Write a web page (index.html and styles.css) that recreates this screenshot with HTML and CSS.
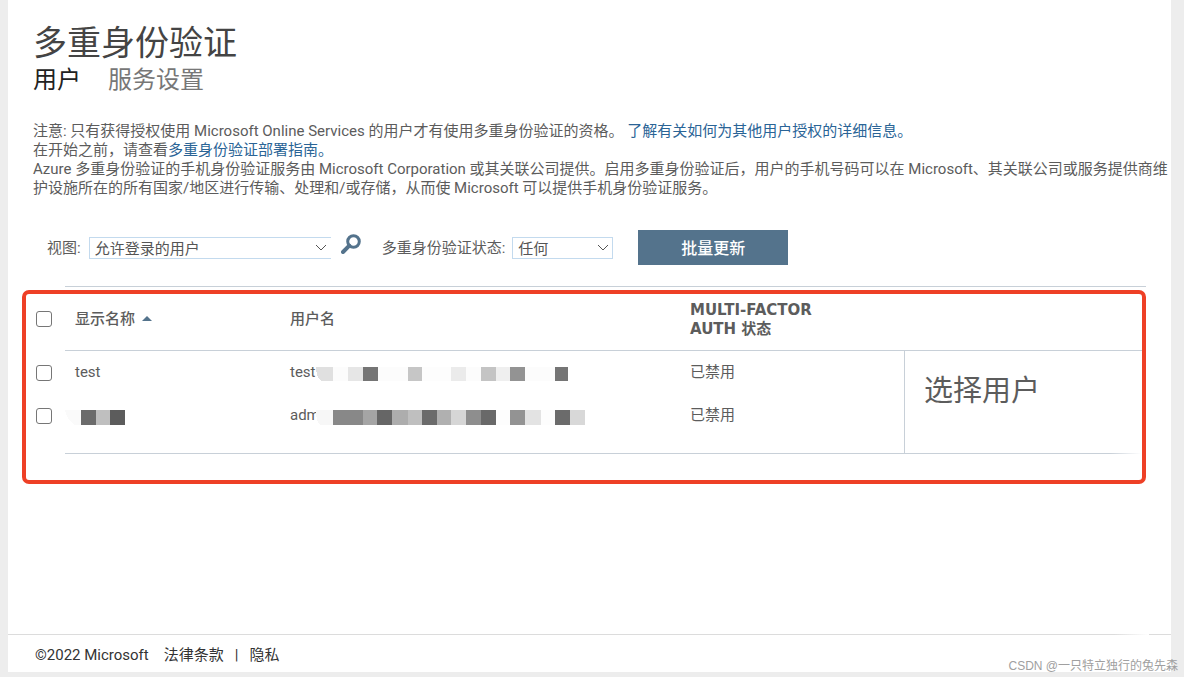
FILE: index.html
```html
<!DOCTYPE html>
<html lang="zh-CN">
<head>
<meta charset="utf-8">
<meta name="viewport" content="width=device-width, initial-scale=1">
<title>多重身份验证</title>
<link rel="stylesheet" href="styles.css">
</head>
<body>
<div class="page">
  <main class="content">
    <h1 class="title">多重身份验证</h1>
    <nav class="tabs">
      <a class="tab tab-active" href="#users" aria-current="page">用户</a>
      <a class="tab" href="#settings">服务设置</a>
    </nav>
    <div class="notice">
      <p>注意: 只有获得授权使用 Microsoft Online Services 的用户才有使用多重身份验证的资格。 <a href="#license">了解有关如何为其他用户授权的详细信息。</a></p>
      <p>在开始之前，请查看<a href="#guide">多重身份验证部署指南。</a></p>
      <p>Azure 多重身份验证的手机身份验证服务由 Microsoft Corporation 或其关联公司提供。启用多重身份验证后，用户的手机号码可以在 Microsoft、其关联公司或服务提供商维护设施所在的所有国家/地区进行传输、处理和/或存储，从而使 Microsoft 可以提供手机身份验证服务。</p>
    </div>
    <form class="filters">
      <label class="label" for="view">视图:</label>
      <span class="picker picker-view">
        <select id="view"><option>允许登录的用户</option></select>
        <svg class="chevron" viewBox="0 0 12 8" aria-hidden="true"><path d="M1 1l5 5 5-5"/></svg>
      </span>
      <button class="search" type="button" aria-label="搜索">
        <svg viewBox="0 0 20 20" aria-hidden="true"><circle cx="12.500" cy="7.500" r="5.800"/><path class="handle" d="M8.300 11.700L2 18"/></svg>
      </button>
      <label class="label" for="state">多重身份验证状态:</label>
      <span class="picker picker-state">
        <select id="state"><option>任何</option></select>
        <svg class="chevron" viewBox="0 0 12 8" aria-hidden="true"><path d="M1 1l5 5 5-5"/></svg>
      </span>
      <button class="bulk" type="button">批量更新</button>
    </form>
    <section class="results">
      <table class="users">
        <colgroup><col class="col-check"><col class="col-name"><col class="col-user"><col class="col-state"><col class="col-panel"></colgroup>
        <thead>
          <tr>
            <td class="check"><input type="checkbox" aria-label="全选"></td>
            <th scope="col">显示名称<svg class="sort" viewBox="0 0 10 6" aria-hidden="true"><path d="M0 6L5 1l5 5z"/></svg></th>
            <th scope="col">用户名</th>
            <th scope="col"><span class="auth">MULTI-FACTOR AUTH 状态</span></th>
            <th></th>
          </tr>
        </thead>
        <tbody>
          <tr>
            <td class="check"><input type="checkbox" aria-label="test"></td>
            <td>test</td>
            <td><div class="masked"><span class="stub">test</span><svg class="mosaic" width="269" height="14" viewBox="0 0 269 14" aria-hidden="true">
              <path fill="#e0e0e0" d="M0 0h17v14H5Q0 10 0 0z"/><path fill="#fcfcfc" d="M17 0h15v14H17z"/><path fill="#e6e6e6" d="M32 0h15v14H32z"/><path fill="#757575" d="M47 0h15v14H47z"/><path fill="#fcfcfc" d="M62 0h30v14H62z"/><path fill="#c6c6c6" d="M92 0h14v14H92z"/><path fill="#fdfdfd" d="M106 0h29v14h-29z"/><path fill="#ebebeb" d="M135 0h15v14h-15z"/><path fill="#fcfcfc" d="M150 0h15v14h-15z"/><path fill="#c4c4c4" d="M165 0h15v14h-15z"/><path fill="#efefef" d="M180 0h14v14h-14z"/><path fill="#939393" d="M194 0h15v14h-15z"/><path fill="#fcfcfc" d="M209 0h30v14h-30z"/><path fill="#757575" d="M239 0h13v14h-13z"/>
            </svg></div></td>
            <td>已禁用</td>
            <td class="panel" rowspan="2"><h2>选择用户</h2></td>
          </tr>
          <tr>
            <td class="check"><input type="checkbox" aria-label="adm"></td>
            <td class="name-masked"><svg class="mosaic" width="60" height="15" viewBox="0 0 60 15" aria-hidden="true">
              <path fill="#fafafa" d="M0 0h16v15H9Q2 9 0 0z"/><path fill="#6b6b6b" d="M16 0h15v15H16z"/><path fill="#bfbfbf" d="M31 0h14v15H31z"/><path fill="#5c5c5c" d="M45 0h15v15H45z"/>
            </svg></td>
            <td><div class="masked"><span class="stub">adm</span><svg class="mosaic mosaic-cover" width="269" height="15" viewBox="0 0 269 15" aria-hidden="true">
              <path fill="#f7f7f7" d="M0 0h17v15H5Q0 13 0 0z"/><path fill="#888888" d="M17 0h30v15H17z"/><path fill="#a5a5a5" d="M47 0h14v15H47z"/><path fill="#666666" d="M61 0h15v15H61z"/><path fill="#adadad" d="M76 0h16v15H76z"/><path fill="#bfbfbf" d="M92 0h14v15H92z"/><path fill="#6b6b6b" d="M106 0h15v15h-15z"/><path fill="#b0b0b0" d="M121 0h14v15h-14z"/><path fill="#d6d6d6" d="M135 0h15v15h-15z"/><path fill="#8e8e8e" d="M150 0h15v15h-15z"/><path fill="#696969" d="M165 0h15v15h-15z"/><path fill="#fdfdfd" d="M180 0h14v15h-14z"/><path fill="#939393" d="M194 0h15v15h-15z"/><path fill="#e3e3e3" d="M209 0h16v15h-16z"/><path fill="#fdfdfd" d="M225 0h14v15h-14z"/><path fill="#6b6b6b" d="M239 0h15v15h-15z"/><path fill="#d8d8d8" d="M254 0h15v15h-15z"/>
            </svg></div></td>
            <td>已禁用</td>
          </tr>
        </tbody>
      </table>
      <div class="highlight"></div>
    </section>
  </main>
  <footer class="footer">
    <span>©2022 Microsoft</span>
    <a class="legal" href="#legal">法律条款</a>
    <span class="bar">|</span>
    <a href="#privacy">隐私</a>
  </footer>
</div>
<div class="watermark">CSDN @一只特立独行的兔先森</div>
</body>
</html>
```
FILE: styles.css
```css
* { box-sizing: border-box; }

body {
  margin: 0;
  min-height: 100vh;
  display: flex;
  flex-direction: column;
  padding: 0 13px 5px 8px;
  background: #ededed;
  color: #5c5c5c;
  font: 15px/19px Roboto, "Noto Sans CJK SC", sans-serif;
}

h1, h2, p { margin: 0; font-weight: 400; }
a { color: inherit; text-decoration: none; }

.page {
  flex: 1;
  display: flex;
  flex-direction: column;
  background: #fff;
}

.content { flex: 1; padding: 23px 25px 0; }

.title { color: #444; font-size: 34px; line-height: 40px; }

.tabs { display: flex; gap: 27px; font-size: 24px; line-height: 34px; }
.tab { color: #777; }
.tab-active { color: #222; }

.notice { margin: 25px -25px 0 0; }
.notice a { color: #2a6496; }

.filters {
  display: flex;
  align-items: center;
  margin-top: 32px;
  padding-left: 14px;
}

.label { margin-right: 8px; padding-top: 2px; }
.search + .label { margin-right: 7px; }

.picker { position: relative; display: flex; }
.picker select {
  width: 100%;
  height: 22px;
  padding: 2px 5px 0;
  appearance: none;
  border: 1px solid #c3daee;
  border-radius: 0;
  background: #fff;
  color: #555;
  font: inherit;
}
.picker-view { width: 242px; }
.picker-view select { border-right: 0; }
.picker-state { width: 101px; }

.chevron {
  position: absolute;
  right: 4px;
  top: 7px;
  width: 12px;
  height: 8px;
  fill: none;
  stroke: #555;
  pointer-events: none;
}

.search {
  display: flex;
  margin: 0 21px 8px 10px;
  padding: 0;
  border: 0;
  background: none;
}
.search svg { width: 20px; height: 20px; fill: none; stroke: #54738c; stroke-width: 3; }
.search .handle { stroke-width: 4; stroke-linecap: round; }

.bulk {
  width: 150px;
  height: 35px;
  margin-left: 25px;
  padding: 2px 0 0;
  border: 0;
  background: #54738c;
  color: #fff;
  font: 500 16px/20px Roboto, "Noto Sans CJK SC", sans-serif;
}

.results { position: relative; margin: 21px 0 0 3px; }

.users {
  width: 100%;
  table-layout: fixed;
  border-collapse: separate;
  border-spacing: 0;
  text-align: left;
}
.col-check { width: 29px; }
.col-name { width: 215px; }
.col-user { width: 400px; }
.col-state { width: 224px; }

.users th, .users td { height: 43px; padding: 0 0 0 10px; }
.users thead th {
  height: 65px;
  padding-top: 2px;
  border: solid #c8d0d8;
  border-width: 1px 0;
  font-weight: 500;
}
.users .check { padding: 0; }
.users tbody tr:last-child td { height: 60px; padding-bottom: 17px; }
.users tbody tr:last-child td:not(.check) { border-bottom: 1px solid #c8d0d8; }

.check input {
  display: block;
  width: 16px;
  height: 16px;
  margin: 0;
  appearance: none;
  border: 1px solid #767676;
  border-radius: 3px;
  background: #fff;
}

.sort { width: 10px; height: 6px; margin: 0 0 3px 7px; fill: #54738c; }
.auth {
  display: block;
  width: 150px;
  font-family: "DejaVu Sans", "Noto Sans CJK SC", sans-serif;
  font-weight: 700;
}

/* The mosaic is painted over the tail of the name before it */
.masked { display: flex; }
.stub { width: 26px; }
.mosaic { display: block; flex: none; margin-top: 4px; shape-rendering: crispEdges; }
.mosaic-cover { background: #fff; }
.users .name-masked { padding-left: 0; }

.users .panel {
  padding: 21px 0 0 19px;
  border-left: 1px solid #c8d0d8;
  background: linear-gradient(to right, #c8d0d8 85%, #fff 98%) bottom / 100% 1px no-repeat;
  vertical-align: top;
}
.panel h2 { font-size: 29px; line-height: 38px; }

/* Red frame drawn over the whole user list */
.highlight {
  position: absolute;
  inset: 4px 0 -30px -14px;
  border: 4px solid #ee4026;
  border-radius: 7px;
  pointer-events: none;
}

.footer {
  display: flex;
  padding: 11px 27px 7px;
  border-top: 1px solid;
  border-image: linear-gradient(to right, #dcdcdc 95%, #fff 98%, #dcdcdc 98%) 1;
  color: #333;
}
.legal { margin-left: 15px; }
.bar { margin: 0 11px; }

.watermark {
  position: absolute;
  right: 6px;
  bottom: 2px;
  color: #a0a0a0;
  font: 12px/18px "Liberation Sans", "Noto Sans CJK SC", sans-serif;
}
```
